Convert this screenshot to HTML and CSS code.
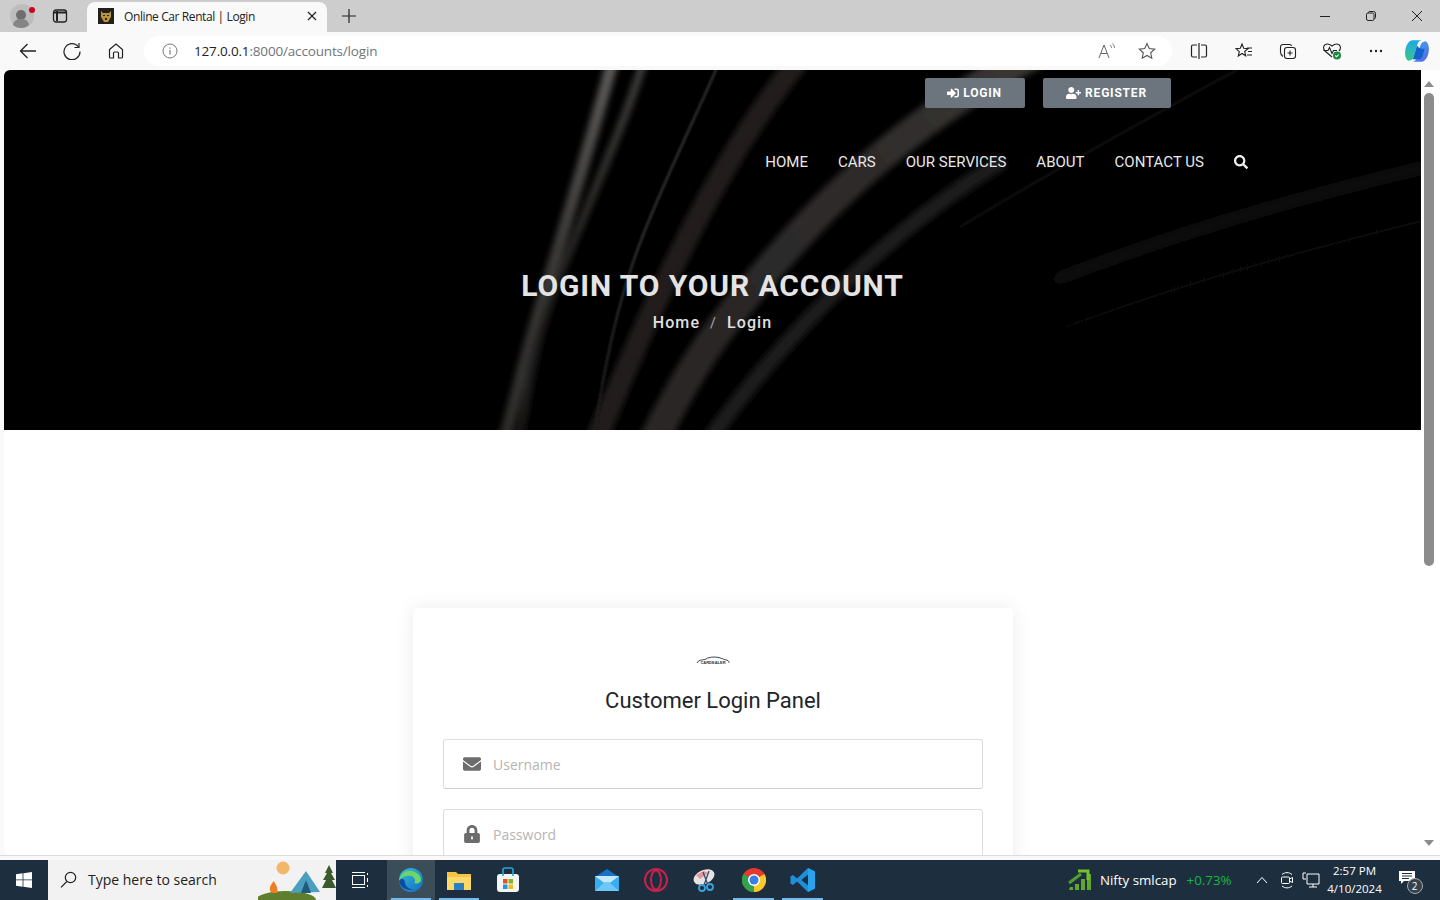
FILE: index.html
```html
<!DOCTYPE html>
<html lang="en">
<head>
    <meta charset="UTF-8">
    <meta name="viewport" content="width=device-width, initial-scale=1.0">
    <title>Online Car Rental | Login</title>
    <link rel="stylesheet" href="styles.css">
</head>
<body>
    <div class="tab-strip">
        <div class="profile">
            <svg width="24" height="24" viewBox="0 0 24 24"><circle cx="12" cy="12" r="12" fill="#bdbdbd"/><circle cx="11" cy="11" r="5" fill="#6e6e6e"/><path d="M3 21c1-5 4-6 8-6s7 1 8 6c-2 2-5 3-8 3s-6-1-8-3z" fill="#858585"/></svg>
            <span class="profile-dot"></span>
        </div>
        <svg class="tab-actions" width="16" height="16" viewBox="0 0 16 16" fill="none" stroke="#222" stroke-width="1.3"><rect x="1.500" y="2" width="13" height="12" rx="2.500"/><path d="M2 4.500h12M5 3v10" stroke-width="2"/></svg>
        <div class="tab">
            <svg width="16" height="16" viewBox="0 0 16 16"><rect width="16" height="16" fill="#222018"/><path d="M3 3l2 2h6l2-2v6l-3 5H6L3 9z" fill="#b8923c"/><path d="M5 7h2v1H5zM9 7h2v1H9zM7 10h2v2H7z" fill="#2b2510"/></svg>
            <span class="tab-title">Online Car Rental | Login</span>
            <svg class="tab-close" width="10" height="10" viewBox="0 0 10 10" stroke="#222" stroke-width="1.2"><path d="M1 1l8 8M9 1l-8 8"/></svg>
        </div>
        <svg class="new-tab" width="16" height="16" viewBox="0 0 16 16" stroke="#222" stroke-width="1.2"><path d="M8 1v14M1 8h14"/></svg>
        <div class="window-controls">
            <svg width="12" height="12" viewBox="0 0 12 12" stroke="#222"><path d="M1 6.500h10"/></svg>
            <svg width="12" height="12" viewBox="0 0 12 12" fill="none" stroke="#222"><rect x="1.500" y="3" width="7.500" height="7.500" rx="1.500"/><path d="M3.500 3V2.500a1 1 0 0 1 1-1h4a2 2 0 0 1 2 2v4a1 1 0 0 1-1 1H9"/></svg>
            <svg width="12" height="12" viewBox="0 0 12 12" stroke="#222"><path d="M1 1l10 10M11 1L1 11"/></svg>
        </div>
    </div>

    <div class="toolbar">
        <svg class="nav-icon first" width="18" height="18" viewBox="0 0 18 18" fill="none" stroke="#222" stroke-width="1.3"><path d="M17 9H1.500M8.500 2l-7 7 7 7"/></svg>
        <svg class="nav-icon" width="18" height="18" viewBox="0 0 18 18" fill="none" stroke="#222" stroke-width="1.2"><path d="M15.500 5A8 8 0 1 0 17 9.500"/><path d="M16 1v4.500h-4.500"/></svg>
        <svg class="nav-icon" width="18" height="18" viewBox="0 0 18 18" fill="none" stroke="#222" stroke-width="1.2"><path d="M2.500 7.500L9 2l6.500 5.500V15a1 1 0 0 1-1 1H11.500v-5a1 1 0 0 0-1-1h-3a1 1 0 0 0-1 1v5H3.500a1 1 0 0 1-1-1z"/></svg>
        <div class="address-bar">
            <svg width="16" height="16" viewBox="0 0 16 16" fill="none" stroke="#777"><circle cx="8" cy="8" r="7"/><path d="M8 7v4.500M8 4.500v1.200" stroke-width="1.200"/></svg>
            <span class="url"><b>127.0.0.1</b>:8000/accounts/login</span>
            <svg class="read-aloud" width="18" height="18" viewBox="0 0 18 18" fill="none" stroke="#666"><path d="M1 16L6 3l5 13M3 11.500h6"/><path d="M12 3c1 1 1.500 2 1.500 3M14.500 1.500c1.200 1.300 2 3 2 4.500" stroke-width=".9"/></svg>
            <svg class="fav-star" width="18" height="18" viewBox="0 0 18 18" fill="none" stroke="#555" stroke-width="1.1"><path d="M9 1.500l2.300 5 5.400.6-4 3.700 1.100 5.400L9 13.500l-4.800 2.700 1.100-5.400-4-3.700 5.400-.6z"/></svg>
        </div>
        <div class="tool-icons">
            <svg width="18" height="18" viewBox="0 0 18 18" fill="none" stroke="#222" stroke-width="1.2"><path d="M7 3H3a1.500 1.500 0 0 0-1.500 1.500v9A1.500 1.500 0 0 0 3 15h4M11 3h4a1.500 1.500 0 0 1 1.500 1.500v9A1.500 1.500 0 0 1 15 15h-4M9 1v16"/></svg>
            <svg class="fav-list" width="18" height="18" viewBox="0 0 18 18" fill="none" stroke="#222" stroke-width="1.1"><path d="M7 2l1.700 4.200 4.300.4-3.300 2.900 1 4.300L7 11.500l-3.700 2.500 1-4.400L1 6.600l4.300-.4zM12 6h5M13 9.500h4M12 13h5"/></svg>
            <svg width="18" height="18" viewBox="0 0 18 18" fill="none" stroke="#222" stroke-width="1.1"><rect x="5.500" y="5.500" width="11" height="11" rx="2.500"/><path d="M11 8.500v5M8.500 11h5M12.500 4A2 2 0 0 0 10.500 2.500H4A2.500 2.500 0 0 0 1.500 5v5c0 2 1 3.500 2.500 4.500"/></svg>
            <svg class="health" width="20" height="18" viewBox="0 0 20 18" fill="none" stroke="#222" stroke-width="1.1"><path d="M10 15L3 9C1 7 1 4 3 2.700S7.500 2 10 4c2.500-2 5-2.600 7-1.300s2 4.300 0 6.300"/><path d="M1.500 8.500H6l1.500-3 2.500 6 1.500-3H15"/><circle cx="15" cy="13.500" r="4" fill="#1c8a3e" stroke="none"/><path d="M13.300 13.500l1.300 1.300 2.100-2.300" stroke="#fff"/></svg>
            <svg width="16" height="16" viewBox="0 0 16 16" fill="#222"><circle cx="3" cy="8" r="1.200"/><circle cx="8" cy="8" r="1.200"/><circle cx="13" cy="8" r="1.200"/></svg>
            <svg class="copilot" width="26" height="26" viewBox="0 0 24 24"><defs><linearGradient id="cop1" x1="0" y1="0" x2="0" y2="1"><stop offset="0" stop-color="#1fa8e8"/><stop offset="1" stop-color="#35c98a"/></linearGradient><linearGradient id="cop2" x1="0" y1="0" x2="1" y2="1"><stop offset="0" stop-color="#39b6f0"/><stop offset="1" stop-color="#5b5fe0"/></linearGradient></defs><path d="M8 2h9c-3 0-4 2-5 5l-3 10c-1 3-3 4-5 4-2-1-3-4-3-7 0-6 3-12 7-12z" fill="url(#cop1)"/><path d="M16 22H7c3 0 4-2 5-5l3-10c1-3 3-4 5-4 2 1 3 4 3 7 0 6-3 12-7 12z" fill="url(#cop2)"/><path d="M12 7l-3 10c-.3 1-.7 1.800-1.300 2.500H14c1.500 0 2.500-1 3-2.500l2-7c-3 0-5 0-7-3z" fill="#1560cc"/></svg>
        </div>
    </div>

    <div class="viewport">
        <div class="page">
            <header class="hero">
                <svg class="hero-streaks" width="1417" height="360" viewBox="0 0 1417 360" fill="none">
                    <defs>
                        <filter id="soft" filterUnits="userSpaceOnUse" x="-50" y="-50" width="1517" height="460"><feGaussianBlur stdDeviation="3"/></filter>
                        <filter id="softer" filterUnits="userSpaceOnUse" x="-50" y="-50" width="1517" height="460"><feGaussianBlur stdDeviation="9"/></filter>
                        <filter id="hair" filterUnits="userSpaceOnUse" x="-50" y="-50" width="1517" height="460"><feGaussianBlur stdDeviation="0.800"/></filter>
                        <linearGradient id="strand1" gradientUnits="userSpaceOnUse" x1="0" y1="0" x2="0" y2="360"><stop offset="0" stop-color="#5c5a58"/><stop offset=".5" stop-color="#3c3a38"/><stop offset="1" stop-color="#2e2c2b"/></linearGradient>
                        <linearGradient id="strand2" gradientUnits="userSpaceOnUse" x1="0" y1="0" x2="0" y2="360"><stop offset="0" stop-color="#413f3d"/><stop offset=".6" stop-color="#232120"/><stop offset="1" stop-color="#1a1918"/></linearGradient>
                        <linearGradient id="ray" gradientUnits="userSpaceOnUse" x1="1420" y1="0" x2="900" y2="0"><stop offset="0" stop-color="#0b0b0b"/><stop offset=".7" stop-color="#070707"/><stop offset="1" stop-color="#000"/></linearGradient>
                        <linearGradient id="hairline" gradientUnits="userSpaceOnUse" x1="0" y1="0" x2="0" y2="360"><stop offset="0" stop-color="#2f2e2d"/><stop offset=".5" stop-color="#302f2f"/><stop offset="1" stop-color="#1a1a1a"/></linearGradient>
                        <linearGradient id="band" gradientUnits="userSpaceOnUse" x1="1050" y1="0" x2="650" y2="360"><stop offset="0" stop-color="#3a3634"/><stop offset=".4" stop-color="#2e2b2b"/><stop offset="1" stop-color="#292626"/></linearGradient>
                    </defs>
                    <g filter="url(#softer)">
                        <path d="M1430 95C1240 140 1080 190 860 290" stroke="url(#ray)" stroke-width="16"/>
                        <path d="M1430 148C1240 195 1080 240 860 340" stroke="url(#ray)" stroke-width="12"/>
                    </g>
                    <g filter="url(#soft)">
                        <path d="M609 -10C590 60 566 140 540 225S512 330 500 370" stroke="url(#strand1)" stroke-width="12"/>
                        <path d="M640 -10C622 50 590 120 560 195S530 290 515 370" stroke="url(#strand2)" stroke-width="8"/>
                        <path d="M795 -10C735 65 689 150 636 267L592 370" stroke="#211f1e" stroke-width="22"/>
                        <path d="M1060 -30C970 10 869 83 793 167S690 290 650 370" stroke="url(#band)" stroke-width="30"/>
                        <path d="M1000 90C900 150 790 250 705 370" stroke="#1c1a1a" stroke-width="16"/>
                    </g>
                    <g filter="url(#hair)">
                        <path d="M714 -5C695 40 660 110 636 173S600 300 590 365" stroke="url(#hairline)" stroke-width="2.500"/>
                        <path d="M1233 0C1140 50 1050 100 956 157" stroke="#1e1d1d" stroke-width="1.500"/>
                    </g>
                </svg>
                <div class="top-buttons">
                    <a class="auth-btn login-btn">
                        <svg width="12" height="12" viewBox="0 0 512 512" fill="#fff"><path d="M416 448h-84c-6.600 0-12-5.400-12-12v-40c0-6.600 5.400-12 12-12h84c17.700 0 32-14.300 32-32V160c0-17.700-14.300-32-32-32h-84c-6.600 0-12-5.400-12-12V76c0-6.600 5.400-12 12-12h84c53 0 96 43 96 96v192c0 53-43 96-96 96zm-47-201L201 79c-15-15-41-4.500-41 17v96H24c-13.300 0-24 10.700-24 24v96c0 13.300 10.700 24 24 24h136v96c0 21.500 26 32 41 17l168-168c9.300-9.400 9.300-24.600 0-34z"/></svg>
                        LOGIN
                    </a>
                    <a class="auth-btn register-btn">
                        <svg width="15" height="12" viewBox="0 0 640 512" fill="#fff"><path d="M624 208h-64v-64c0-8.800-7.200-16-16-16h-32c-8.800 0-16 7.200-16 16v64h-64c-8.800 0-16 7.200-16 16v32c0 8.800 7.200 16 16 16h64v64c0 8.800 7.200 16 16 16h32c8.800 0 16-7.200 16-16v-64h64c8.800 0 16-7.200 16-16v-32c0-8.800-7.200-16-16-16zm-400 48c70.700 0 128-57.300 128-128S294.700 0 224 0 96 57.300 96 128s57.300 128 128 128zm89.600 32h-16.700c-22.200 10.200-46.900 16-72.900 16s-50.600-5.800-72.900-16h-16.700C60.200 288 0 348.200 0 422.400V464c0 26.500 21.500 48 48 48h352c26.500 0 48-21.500 48-48v-41.600c0-74.200-60.200-134.400-134.400-134.400z"/></svg>
                        REGISTER
                    </a>
                </div>
                <nav class="main-nav">
                    <a>HOME</a>
                    <a>CARS</a>
                    <a>OUR SERVICES</a>
                    <a>ABOUT</a>
                    <a>CONTACT US</a>
                    <svg width="14" height="14" viewBox="0 0 512 512" fill="#f0f0f0"><path d="M505 442.700L405.300 343c-4.500-4.500-10.600-7-17-7H372c27.600-35.300 44-79.700 44-128C416 93.100 322.900 0 208 0S0 93.100 0 208s93.100 208 208 208c48.300 0 92.700-16.400 128-44v16.300c0 6.400 2.500 12.500 7 17l99.700 99.700c9.400 9.400 24.600 9.400 33.900 0l28.300-28.300c9.400-9.400 9.400-24.600.1-34zM208 336c-70.700 0-128-57.200-128-128 0-70.700 57.200-128 128-128 70.700 0 128 57.200 128 128 0 70.700-57.200 128-128 128z"/></svg>
                </nav>
                <h1 class="hero-title">LOGIN TO YOUR ACCOUNT</h1>
                <div class="breadcrumb"><span>Home</span><i>/</i><span>Login</span></div>
            </header>

            <section class="login-section">
                <div class="login-card">
                    <div class="card-logo">
                        <svg width="34" height="8" viewBox="0 0 34 8" fill="none" stroke="#2b3442"><path d="M1 7C2 4 6 4 9 3.500 12 1 18 .500 23 1.500c3 1 5 2 9 3 1 1 1 2 1 2.500" stroke-width=".9"/></svg>
                        <span>CARDEALER</span>
                    </div>
                    <h2 class="card-title">Customer Login Panel</h2>
                    <div class="field">
                        <svg width="18" height="18" viewBox="0 0 512 512" fill="#6c6c6c"><path d="M502.300 190.800c3.900-3.100 9.700-.2 9.700 4.700V400c0 26.500-21.500 48-48 48H48c-26.500 0-48-21.500-48-48V195.600c0-5 5.700-7.800 9.700-4.700 22.400 17.400 52.100 39.500 154.100 113.600 21.100 15.400 56.700 47.800 92.200 47.600 35.700.3 72-32.800 92.300-47.600 102-74.100 131.600-96.300 154-113.700zM256 320c23.200.4 56.600-29.200 73.400-41.400 132.700-96.300 142.800-104.700 173.400-128.700 5.800-4.500 9.200-11.500 9.200-18.900v-19c0-26.500-21.500-48-48-48H48C21.500 64 0 85.500 0 112v19c0 7.400 3.400 14.300 9.200 18.900 30.600 23.900 40.700 32.400 173.400 128.700 16.800 12.200 50.200 41.800 73.400 41.400z"/></svg>
                        <span>Username</span>
                    </div>
                    <div class="field">
                        <svg width="18" height="18" viewBox="0 0 448 512" fill="#6c6c6c"><path d="M400 224h-24v-72C376 68.200 307.800 0 224 0S72 68.200 72 152v72H48c-26.500 0-48 21.500-48 48v192c0 26.500 21.500 48 48 48h352c26.500 0 48-21.500 48-48V272c0-26.500-21.500-48-48-48zm-104 0H152v-72c0-39.700 32.300-72 72-72s72 32.300 72 72v72z"/><rect x="200" y="320" width="48" height="90" rx="20" fill="#fff"/></svg>
                        <span>Password</span>
                    </div>
                </div>
            </section>
        </div>
        <div class="scrollbar">
            <span class="arrow-up"></span>
            <span class="thumb"></span>
            <span class="arrow-down"></span>
        </div>
    </div>

    <div class="taskbar">
        <div class="start">
            <svg width="16" height="16" viewBox="0 0 16 16" fill="#fff"><path d="M0 2.300L6.600 1.300V7.500H0zM7.400 1.200L16 0V7.500H7.400zM0 8.300H6.600V14.700L0 13.700zM7.400 8.300H16V16L7.400 14.800z"/></svg>
        </div>
        <div class="search-box">
            <svg width="17" height="17" viewBox="0 0 17 17" fill="none" stroke="#222" stroke-width="1.200"><circle cx="10.500" cy="6.500" r="5.200"/><path d="M6.800 10.500L1 16.300"/></svg>
            <span>Type here to search</span>
            <svg class="search-art" width="78" height="40" viewBox="0 0 78 40">
                <circle cx="25" cy="8" r="6.500" fill="#f3b76a"/>
                <ellipse cx="28" cy="40" rx="30" ry="9" fill="#5f7f2e"/>
                <path d="M32 33L48 11l14 21z" fill="#4a9fc0"/>
                <path d="M43 33l5-13 5 13z" fill="#1f5a78"/>
                <path d="M14 33c-4-3-2-8 2-12 1 3 5 7 3 12z" fill="#ef7d22"/>
                <path d="M71 5l4 8h-2l4 7h-3l4 8H64l4-8h-3l4-7h-2z" fill="#3a5a2c"/>
            </svg>
        </div>
        <div class="task-item view-item">
            <svg width="18" height="18" viewBox="0 0 18 18" fill="none" stroke="#fff"><rect x="1.500" y="4.500" width="12" height="9"/><path d="M1 1.500h13M1 16.500h13M16.500 2v2M16.500 7v4M16.500 14v2"/></svg>
        </div>
        <div class="task-item pinned active running">
            <svg width="26" height="26" viewBox="0 0 26 26"><defs><linearGradient id="edge" x1="0" y1="0" x2="1" y2="1"><stop offset="0" stop-color="#35c1d6"/><stop offset="1" stop-color="#1369c4"/></linearGradient></defs><circle cx="13" cy="13" r="12" fill="url(#edge)"/><path d="M1 14C2 6 9 3 14 4c5 1 9 4 9 9 0 3-4 4-7 3 2-2 1-6-3-7-5-1-10 1-12 5z" fill="#6cd66a"/><path d="M7 15c0 5 5 8 9 7-6 3-14-1-15-8 2-3 5-3 6 1z" fill="#0c4da2"/></svg>
        </div>
        <div class="task-item pinned running">
            <svg width="24" height="22" viewBox="0 0 24 22"><path d="M0 3h9l2 2h13v16H0z" fill="#f5c345"/><path d="M0 8h24v13H0z" fill="#ffd968"/><rect x="7" y="14" width="10" height="7" fill="#2c7fc0"/></svg>
        </div>
        <div class="task-item pinned store-item">
            <svg width="24" height="26" viewBox="0 0 24 26"><rect x="1" y="7" width="22" height="18" rx="3" fill="#f5f5f5"/><path d="M7 9V3a2 2 0 0 1 2-2h6a2 2 0 0 1 2 2v6" fill="none" stroke="#25a7d9" stroke-width="1.600"/><rect x="7" y="12" width="4.500" height="4.500" fill="#e8512a"/><rect x="12.500" y="12" width="4.500" height="4.500" fill="#7db52c"/><rect x="7" y="17.500" width="4.500" height="4.500" fill="#1e9be0"/><rect x="12.500" y="17.500" width="4.500" height="4.500" fill="#f5b91d"/></svg>
        </div>
        <div class="task-gap"></div>
        <div class="task-item">
            <svg width="26" height="24" viewBox="0 0 26 24"><path d="M1 9L13 1l12 8v13H1z" fill="#1473c9"/><path d="M1 8h24v15H1z" fill="#38aef0"/><path d="M1 8l12 9 12-9" fill="#c8e8fb"/><path d="M1 23l10-9h4l10 9z" fill="#6fc7f7"/></svg>
        </div>
        <div class="task-item">
            <svg width="26" height="26" viewBox="0 0 26 26" fill="none" stroke="#c8214e" stroke-width="2"><circle cx="13" cy="13" r="11"/><ellipse cx="13" cy="13" rx="5" ry="9.500"/></svg>
        </div>
        <div class="task-item">
            <svg width="26" height="26" viewBox="0 0 26 26"><ellipse cx="12" cy="10" rx="11" ry="7" fill="#e8e2e0" transform="rotate(-25 12 10)"/><path d="M4 8l8-4 4 2-8 6z" fill="#d9475c" opacity=".5"/><path d="M11 5l5 13M17 4l-5 14" stroke="#33506b" stroke-width="1.300"/><circle cx="10" cy="21" r="3" fill="none" stroke="#3ba2dc" stroke-width="1.800"/><circle cx="18" cy="20" r="3" fill="none" stroke="#3ba2dc" stroke-width="1.800"/></svg>
        </div>
        <div class="task-item running">
            <svg width="24" height="24" viewBox="0 0 24 24"><circle cx="12" cy="12" r="12" fill="#e53a2e"/><path d="M12 12L22.400 6A12 12 0 0 1 12 24z" fill="#f8c92a"/><path d="M12 12L12 24A12 12 0 0 1 1.600 6z" fill="#2ea44f"/><circle cx="12" cy="12" r="6" fill="#fff"/><circle cx="12" cy="12" r="4.500" fill="#3b7de8"/></svg>
        </div>
        <div class="task-item running">
            <svg width="26" height="26" viewBox="0 0 26 26"><path d="M18 1l7 3.500v17L18 25 7 14.500l-4 3.500-2.500-1.500v-7L3 8l4 3.500zM18 7.500L11.500 13 18 18.500z" fill="#1f8fdc"/><path d="M18 1l7 3.500v17L18 25z" fill="#2aa3ee"/></svg>
        </div>
        <div class="tray">
            <svg width="24" height="24" viewBox="0 0 24 24"><path d="M1 22l1-3h3v3zM7 22v-6h4v6zM13 22V11h4v11zM19 22V6h4v16z" fill="#5fa82c"/><path d="M1 15L13 6" stroke="#4fa030" stroke-width="3"/><path d="M10 3h10v9" fill="none" stroke="#78c02e" stroke-width="3"/></svg>
            <span class="ticker-name">Nifty smlcap</span>
            <span class="ticker-value">+0.73%</span>
            <svg class="tray-chevron" width="12" height="8" viewBox="0 0 12 8" fill="none" stroke="#fff"><path d="M1 7l5-5.500L11 7"/></svg>
            <svg class="tray-meet" width="16" height="18" viewBox="0 0 16 18" fill="none" stroke="#fff"><rect x="2.500" y="6" width="8" height="6.500" rx="1"/><path d="M10.500 8l3-1.500v5l-3-1.500M3 3.500c3-2.500 7-2.500 10 0M3 15c3 2.500 7 2.500 10 0"/></svg>
            <svg class="tray-net" width="18" height="16" viewBox="0 0 18 16" fill="none" stroke="#fff"><path d="M4 1H1v6h3M5 2h12v10H5zM11 12v3M7 15h8"/></svg>
            <div class="clock"><span>2:57 PM</span><span>4/10/2024</span></div>
            <div class="notify">
                <svg width="16" height="13" viewBox="0 0 16 13"><path d="M0 0h16v10H5l-3 3v-3H0z" fill="#fff"/><path d="M3 2.500h10M3 5h10M3 7.500h7" stroke="#1c2e3e"/></svg>
                <span class="notify-count">2</span>
            </div>
        </div>
    </div>
</body>
</html>
```

FILE: styles.css
```css
* {
    box-sizing: border-box;
}

html, body {
    margin: 0;
    height: 900px;
    overflow: hidden;
}

body {
    font-family: "Open Sans", sans-serif;
    display: flex;
    flex-direction: column;
    background-color: #f9f9f9;
}

a {
    text-decoration: none;
}

/* browser tabs */
.tab-strip {
    height: 32px;
    flex: none;
    display: flex;
    align-items: center;
    background-color: #cdcdcd;
    padding: 0 0 1px 10px;
}

.profile {
    position: relative;
    width: 24px;
    height: 24px;
}

.profile-dot {
    position: absolute;
    top: 3px;
    right: -1px;
    width: 6px;
    height: 6px;
    border-radius: 50%;
    background-color: #d0021b;
}

.tab-actions {
    margin-left: 18px;
}

.tab {
    width: 240px;
    height: 30px;
    margin-left: 19px;
    margin-bottom: -1px;
    padding: 0 10px 2px 11px;
    align-self: flex-end;
    display: flex;
    align-items: center;
    background-color: #f9f9f9;
    border-radius: 8px 8px 0 0;
}

.tab-title {
    margin-left: 10px;
    font-size: 12px;
    letter-spacing: -0.4px;
    color: #222;
    flex: 1;
    white-space: nowrap;
}

.new-tab {
    margin-left: 14px;
}

.window-controls {
    margin-left: auto;
    display: flex;
    gap: 34px;
    padding-right: 17px;
}

/* address row */
.toolbar {
    height: 38px;
    flex: none;
    display: flex;
    align-items: center;
    background-color: #f9f9f9;
}

.nav-icon {
    margin-left: 26px;
}

.nav-icon.first {
    margin-left: 19px;
}

.address-bar {
    width: 1028px;
    height: 30px;
    margin-left: 19px;
    padding: 0 16px 0 18px;
    display: flex;
    align-items: center;
    background-color: #fff;
    border-radius: 15px;
}

.url {
    margin-left: 16px;
    font-size: 13.500px;
    letter-spacing: -0.17px;
    color: #70757a;
    flex: 1;
}

.url b {
    font-weight: 400;
    color: #222;
}

.fav-star {
    margin-left: 22px;
}

.tool-icons {
    flex: 1;
    display: flex;
    align-items: center;
    gap: 26px;
    padding-left: 18px;
}

.fav-list {
    margin-left: 1px;
}

.health {
    margin-left: -1px;
}

.copilot {
    margin-left: -6px;
}

/* page area */
.viewport {
    height: 786px;
    flex: none;
    display: flex;
    background-color: #f9f9f9;
    border-bottom: 1px solid #dcdcdc;
}

.page {
    width: 1417px;
    margin-left: 4px;
    overflow: hidden;
    background-color: #fff;
    border-radius: 6px 0 0 6px;
}

.hero {
    position: relative;
    height: 360px;
    padding-top: 8px;
    background-color: #000;
    text-align: center;
    overflow: hidden;
}

.hero-streaks {
    position: absolute;
    top: 0;
    left: 0;
}

.top-buttons {
    position: relative;
    display: flex;
    justify-content: flex-end;
    gap: 18px;
    padding-right: 250px;
}

.auth-btn {
    height: 30px;
    padding-right: 1px;
    display: flex;
    align-items: center;
    justify-content: center;
    gap: 4px;
    background-color: #6c757d;
    border-radius: 2px;
    color: #fff;
    font-family: Roboto, sans-serif;
    font-size: 12px;
    font-weight: 700;
    letter-spacing: 0.8px;
}

.login-btn {
    width: 100px;
}

.register-btn {
    width: 128px;
}

.main-nav {
    position: relative;
    height: 30px;
    margin-top: 39px;
    padding-right: 173px;
    display: flex;
    justify-content: flex-end;
    align-items: center;
    gap: 30px;
}

.main-nav a {
    font-family: Roboto, sans-serif;
    font-size: 15px;
    font-weight: 400;
    letter-spacing: 0.02px;
    color: #e8e8e8;
}

.hero-title {
    position: relative;
    margin: 91px 0 0;
    font-family: Roboto, sans-serif;
    font-size: 30px;
    line-height: 36px;
    font-weight: 700;
    letter-spacing: 0.9px;
    color: #e4e4e4;
}

.breadcrumb {
    position: relative;
    margin-top: 7px;
    font-family: Roboto, sans-serif;
    font-size: 16px;
    line-height: 24px;
    font-weight: 500;
    letter-spacing: 1.1px;
    color: #e0e0e0;
}

.breadcrumb i {
    margin: 0 10px;
    font-style: normal;
    font-size: 14px;
    font-weight: 400;
    color: #aaa;
}

/* login */
.login-section {
    display: flex;
    justify-content: center;
    padding-top: 178px;
}

.login-card {
    width: 600px;
    height: 400px;
    margin-left: 1px;
    padding: 48px 30px 0;
    background-color: #fff;
    border-radius: 4px;
    box-shadow: 0 0 20px rgba(0, 0, 0, 0.08);
}

.card-logo {
    height: 12px;
    display: flex;
    flex-direction: column;
    align-items: center;
}

.card-logo svg {
    display: block;
}

.card-logo span {
    font-family: "Liberation Sans", sans-serif;
    font-size: 4px;
    line-height: 4px;
    font-weight: 700;
    color: #2b3442;
    margin-top: -3px;
}

.card-title {
    margin: 18px 0 23px;
    text-align: center;
    font-family: Roboto, sans-serif;
    font-size: 22px;
    line-height: 30px;
    font-weight: 400;
    color: #212529;
}

.field {
    height: 50px;
    margin-bottom: 20px;
    padding-left: 19px;
    display: flex;
    align-items: center;
    gap: 12px;
    border: 1px solid #dedede;
    border-bottom-color: #cfcfcf;
    border-radius: 3px;
    font-size: 14px;
    color: #b5b5b5;
}

.field svg {
    width: 18px;
}

/* scrollbar */
.scrollbar {
    width: 19px;
    flex: none;
    display: flex;
    flex-direction: column;
    align-items: center;
    padding: 11px 4px 9px 0;
    background-color: #fff;
}

.arrow-up {
    width: 0;
    height: 0;
    border-left: 5px solid transparent;
    border-right: 5px solid transparent;
    border-bottom: 6px solid #8c8c8c;
}

.thumb {
    width: 10px;
    height: 473px;
    margin-top: 6px;
    border-radius: 5px;
    background-color: #8c8c8c;
}

.arrow-down {
    width: 0;
    height: 0;
    margin-top: auto;
    border-left: 5px solid transparent;
    border-right: 5px solid transparent;
    border-top: 6px solid #8c8c8c;
}

/* windows taskbar */
.taskbar {
    height: 40px;
    margin-top: 4px;
    flex: none;
    display: flex;
    align-items: center;
    background-color: #1d2f3f;
}

.start {
    width: 48px;
    height: 40px;
    display: flex;
    align-items: center;
    justify-content: center;
}

.search-box {
    position: relative;
    width: 288px;
    height: 40px;
    padding: 0 0 1px 12px;
    display: flex;
    align-items: center;
    gap: 11px;
    background-color: #f2f2f2;
    font-size: 14px;
    color: #222;
    overflow: hidden;
}

.search-art {
    position: absolute;
    right: 0;
    top: 0;
}

.task-item {
    position: relative;
    width: 49px;
    height: 40px;
    flex: none;
    display: flex;
    align-items: center;
    justify-content: center;
}

.view-item {
    width: 51px;
    padding-right: 3px;
}

.task-item.pinned {
    width: 48px;
}

.store-item {
    padding-left: 2px;
}

.task-item.active {
    background-color: #3c4d5a;
}

.task-item.running::after {
    content: "";
    position: absolute;
    left: 4px;
    right: 4px;
    bottom: 0;
    height: 2px;
    background-color: #76b9ed;
}

.task-gap {
    width: 51px;
    flex: none;
}

.tray {
    flex: 1;
    display: flex;
    align-items: center;
    height: 40px;
    padding-left: 241px;
    color: #fff;
    font-size: 13.300px;
}

.ticker-name {
    margin-left: 8px;
    white-space: nowrap;
}

.ticker-value {
    margin-left: 10px;
    color: #16b83a;
    white-space: nowrap;
}

.tray-chevron {
    margin-left: 24px;
}

.tray-meet {
    margin-left: 11px;
}

.tray-net {
    margin-left: 7px;
}

.clock {
    width: 68px;
    margin-left: 1px;
    display: flex;
    flex-direction: column;
    align-items: center;
    font-size: 11.500px;
    line-height: 18px;
}

.notify {
    position: relative;
    margin-left: 10px;
    height: 21px;
}

.notify-count {
    position: absolute;
    top: 8px;
    left: 8px;
    width: 16px;
    height: 16px;
    border-radius: 50%;
    background-color: #33424e;
    border: 1px solid #aaa;
    font-size: 10px;
    line-height: 14px;
    text-align: center;
}
```
